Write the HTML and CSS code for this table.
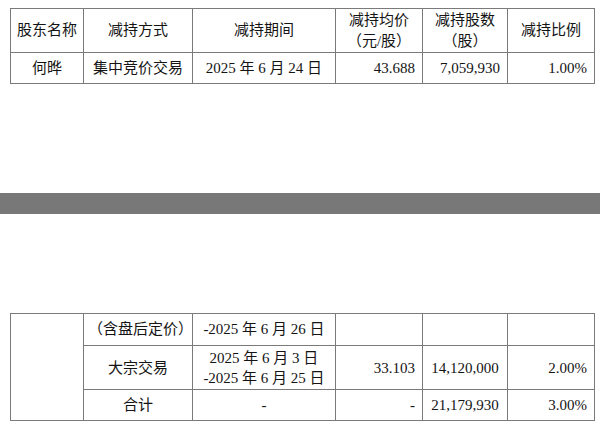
FILE: index.html
```html
<!DOCTYPE html>
<html lang="zh-CN">
<head>
<meta charset="utf-8">
<title>减持情况</title>
<link rel="stylesheet" href="styles.css">
</head>
<body>
<div class="page">
  <table class="grid top">
    <colgroup>
      <col class="c1"><col class="c2"><col class="c3"><col class="c4"><col class="c5"><col class="c6">
    </colgroup>
    <tr class="hrow">
      <td>股东名称</td>
      <td>减持方式</td>
      <td>减持期间</td>
      <td>减持均价<br>（元/股）</td>
      <td>减持股数<br>（股）</td>
      <td>减持比例</td>
    </tr>
    <tr class="drow">
      <td>何晔</td>
      <td>集中竞价交易</td>
      <td>2025 年 6 月 24 日</td>
      <td class="num">43.688</td>
      <td class="num">7,059,930</td>
      <td class="num">1.00%</td>
    </tr>
  </table>

  <div class="divider"></div>

  <table class="grid bottom">
    <colgroup>
      <col class="c1"><col class="c2"><col class="c3"><col class="c4"><col class="c5"><col class="c6">
    </colgroup>
    <tr class="r1">
      <td rowspan="3"></td>
      <td>（含盘后定价）</td>
      <td>-2025 年 6 月 26 日</td>
      <td></td>
      <td></td>
      <td></td>
    </tr>
    <tr class="r2">
      <td>大宗交易</td>
      <td>2025 年 6 月 3 日<br>-2025 年 6 月 25 日</td>
      <td class="num">33.103</td>
      <td class="num c">14,120,000</td>
      <td class="num">2.00%</td>
    </tr>
    <tr class="r3">
      <td>合计</td>
      <td>-</td>
      <td class="num">-</td>
      <td class="num c">21,179,930</td>
      <td class="num">3.00%</td>
    </tr>
  </table>
  <p class="note">注：1.减持股份来源为首次公开发行股票前已发行股份、因权益分派转增的股份。</p>
</div>
</body>
</html>
```

FILE: styles.css
```css
html, body {
  margin: 0;
  padding: 0;
  background: #ffffff;
}

.page {
  width: 600px;
  height: 425px;
  overflow: hidden;
  padding-top: 8px;
  box-sizing: border-box;
  font-family: "Liberation Serif", "Noto Sans CJK SC", serif;
  font-size: 15px;
  color: #141414;
}

.grid {
  border-collapse: collapse;
  table-layout: fixed;
  width: 584px;
  margin-left: 10px;
}

.grid td {
  border: 1px solid #7a7a7a;
  text-align: center;
  vertical-align: middle;
  padding: 0 4px;
  line-height: 21px;
  white-space: nowrap;
}

.grid td.num {
  text-align: right;
  padding-right: 7px;
}

.grid td.num.c {
  text-align: center;
  padding-right: 4px;
}

.c1 { width: 73px; }
.c2 { width: 109px; }
.c3 { width: 143px; }
.c4 { width: 87px; }
.c5 { width: 85px; }
.c6 { width: 87px; }

.hrow td { height: 43px; }
.drow td { height: 30px; }

.divider {
  height: 21px;
  margin-top: 109px;
  margin-bottom: 99px;
  background: #787878;
}

.r1 td { height: 31px; }
.r2 td { height: 43px; line-height: 20px; }
.r3 td { height: 30px; }

.note {
  margin: 3px 0 0 40px;
  line-height: 20px;
  white-space: nowrap;
}
```
